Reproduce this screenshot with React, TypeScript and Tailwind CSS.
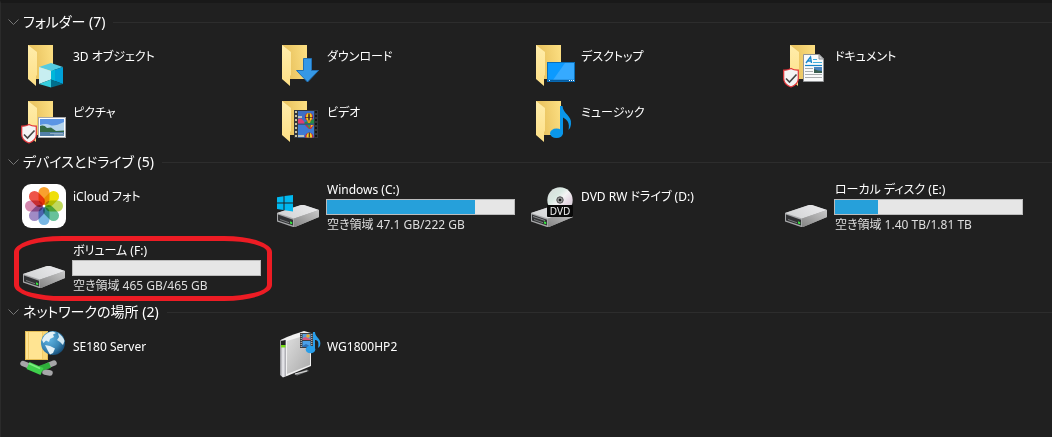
/**
 * "This PC" view: collapsible groups of folders, drives and network places shown as tiles.
 */

import { useState } from 'react';
import type { ReactNode } from 'react';

interface Item {
  name: string;
  icon: ReactNode;
  usage?: { percent: number; text: string };
  marked?: boolean;
}

interface GroupProps {
  title: string;
  items: Item[];
  tall?: boolean;
}

function Icon({ children }: { children: ReactNode }) {
  return (
    <svg viewBox="0 0 48 48" className="h-12 w-12 shrink-0" aria-hidden="true">
      {children}
    </svg>
  );
}

function Folder({ children, synced }: { children: ReactNode; synced?: boolean }) {
  return (
    <Icon>
      <defs>
        <linearGradient id="folderBack" x1="0" x2="1" y1="0.6" y2="0.4">
          <stop offset="0.3" stopColor="#ebc663" />
          <stop offset="1" stopColor="#fbdd80" />
        </linearGradient>
        <linearGradient id="folderFlap" x1="0" x2="0" y1="0" y2="1">
          <stop offset="0" stopColor="#ffedab" />
          <stop offset="1" stopColor="#fddf86" />
        </linearGradient>
      </defs>
      <path d="M8 4H33V38H8Z" fill="url(#folderBack)" />
      <path d="M8 4L17 11V34L16 35V45L8 38Z" fill="url(#folderFlap)" />
      {children}
      {synced && (
        <>
          <path d="M9 27.5C11.5 29 14 29.3 16.3 29.2V37.5C16.3 42 13 44.5 9 46C5 44.5 1.7 42 1.7 37.5V29.2C4 29.3 6.5 29 9 27.5Z" fill="#f4f4f4" stroke="#e23338" strokeWidth="1.2" />
          <path d="M4 37.5L7.5 41L14.5 33.5" fill="none" stroke="#444" strokeWidth="1.6" />
        </>
      )}
    </Icon>
  );
}

function Note() {
  return (
    <>
      <path d="M32 9H34.5C35 17 44 18.5 43 27C42.7 29.5 42 31.5 40.5 33C42 26 39.5 23 35 20.5V36H32Z" fill="#0a97ea" />
      <ellipse cx="28.5" cy="36.3" rx="6.5" ry="4.8" fill="#0a97ea" />
    </>
  );
}

function Balloon({ cx, cy, r }: { cx: number; cy: number; r: number }) {
  return (
    <>
      <circle cx={cx} cy={cy} r={r} fill="#bd2440" />
      <ellipse cx={cx} cy={cy} rx={r * 0.75} ry={r} fill="#f5cf1e" />
      <ellipse cx={cx} cy={cy} rx={r * 0.22} ry={r} fill="#4a3328" />
      <path d={`M${cx - r} ${cy + 0.5}H${cx + r}`} stroke="#3c2230" strokeWidth="0.7" />
      <path d={`M${cx - 2} ${cy + r - 0.5}H${cx + 2}L${cx + 1} ${cy + r + 2}H${cx - 1}Z`} fill="#d8991a" />
    </>
  );
}

function Film() {
  return (
    <>
      <rect x="20" y="13" width="24" height="28" fill="#34363a" />
      <rect x="24" y="14" width="16" height="12.5" fill="#3e6fc6" />
      <rect x="24" y="27.5" width="16" height="13" fill="#3f7bd3" />
      <path d="M24 22Q28 20 31 26.5H24Z" fill="#dc3f73" />
      <path d="M31 25L40 22V26.5H30Z" fill="#238b49" />
      <path d="M24 20H28M24 39H30" stroke="#e8dcb2" strokeWidth="1.5" />
      <Balloon cx={35} cy={20} r={4} />
      <path d="M31 28H40L37 32H35Z" fill="#ca2d38" />
      <path d="M33 28H36V32Z" fill="#3b9a42" />
      <path d="M37 28H39L36.5 31Z" fill="#f6d321" />
      <path d="M31 40.5C30.5 34 40 34 39.5 40.5Z" fill="#be2644" />
      <path d="M32.5 40.5C32 34 38.5 34 38 40.5Z" fill="#f4d021" />
      <path d="M35.3 35.5V40.5" stroke="#493225" strokeWidth="1.2" />
      <path d="M22 14V41" stroke="#c9c4a4" strokeWidth="2" strokeDasharray="2 2" />
      <path d="M42 14V41" stroke="#101214" strokeWidth="2" strokeDasharray="2 2" />
    </>
  );
}

function Disk({ children, slot }: { children?: ReactNode; slot?: boolean }) {
  return (
    <Icon>
      <defs>
        <linearGradient id="diskTop" x1="0" x2="1" y1="0.7" y2="0.3">
          <stop offset="0" stopColor="#d3d4d5" />
          <stop offset="1" stopColor="#e9e9eb" />
        </linearGradient>
        <linearGradient id="diskSide" x1="0" x2="1" y1="1" y2="0">
          <stop offset="0" stopColor="#858585" />
          <stop offset="1" stopColor="#c8c8c8" />
        </linearGradient>
      </defs>
      <path d="M3 32L27 24H30L45 29V36L21 46H19L3 40.5Z" fill="#a6a7a9" />
      <path d="M3 32L27 24H30L45 29L20 37.5Z" fill="url(#diskTop)" />
      <path d="M20 37.5L45 29V36L21 46H20Z" fill="url(#diskSide)" />
      <path d="M4 33.5L19 38.7V44.5L4 39.5Z" fill="#313234" />
      <path d="M6 38.5L15 41.7" stroke="#77797b" strokeWidth="1" />
      {slot && <path d="M5 35.5L17 39.5" stroke="#898b8d" strokeWidth="1" />}
      <path d="M16 40.3L18.2 41.2V43.2L16 42.5Z" fill="#36e43f" />
      {children}
    </Icon>
  );
}

const objects3d = (
  <Folder>
    <path d="M19 26L31 22L43 26L31 30Z" fill="#54cbe1" />
    <path d="M19 26L31 30V38.5L19 43Z" fill="#c7eef1" />
    <path d="M43 26L31 30V38.5L43 43Z" fill="#00a1d8" />
    <path d="M31 30L35 28.7V40L31 38.5Z" fill="#00b7da" />
    <path d="M19 43L31 38.5V46.5Z" fill="#35cddd" />
    <path d="M43 43L31 38.5V46.5Z" fill="#006f8d" />
  </Folder>
);

const downloads = (
  <Folder>
    <path d="M29.5 17.5H37.5V29.5H44.5L33.5 41L22.5 29.5H29.5Z" fill="#3598e6" stroke="#2170b4" strokeWidth="1" />
  </Folder>
);

const desktop = (
  <Folder>
    <rect x="19.5" y="21.5" width="27" height="19" fill="#0b9aff" stroke="#086eb8" />
    <path d="M37 22H46V39H25Z" fill="#36aaff" />
    <path d="M20 39.5H46" stroke="#075b9d" strokeWidth="1.5" />
    <path d="M21 39.5H22M41 39.5H42M43 39.5H44M45 39.5H46" stroke="#fff" strokeWidth="1" />
  </Folder>
);

const documents = (
  <Folder synced>
    <path d="M21.5 13.5H37L41.5 18V40.5H21.5Z" fill="#f9fafa" stroke="#929496" />
    <path d="M37 13.5V18H41.5Z" fill="#d7d8d9" stroke="#929496" />
    <path d="M24 22L28.5 16L29.5 22M25.5 20H29.5" fill="none" stroke="#1786cc" strokeWidth="1.4" />
    <path d="M31 18.5H35M31 21.5H40" stroke="#43aeda" strokeWidth="1.2" />
    <path d="M23 24.5H40" stroke="#1683c8" strokeWidth="1.2" />
    <path d="M23 27.5H31M23 30.5H31M23 33.5H40M23 36.5H40" stroke="#aaadaf" strokeWidth="1" />
    <rect x="32" y="26" width="8" height="6" fill="#4a83bd" />
    <path d="M32 28L36 29.5L40 30V32H32Z" fill="#395e50" />
  </Folder>
);

const pictures = (
  <Folder synced>
    <rect x="18.5" y="20.5" width="27" height="20" fill="#fff" stroke="#a7a9ac" />
    <rect x="20" y="22" width="24" height="17" fill="#5b95e4" />
    <path d="M20 28Q26 26 30 28T44 25V35H20Z" fill="#b4d4ec" />
    <path d="M20 29Q24 27.5 27 31L31 30.5L36 34L44 33.5V35H20Z" fill="#356a45" />
    <path d="M20 35H44V39H20Z" fill="#527fa8" />
    <path d="M30 36.5H43M34 38H44" stroke="#9fb9cb" strokeWidth="0.8" />
  </Folder>
);

const petals = [
  { angle: 0, color: '#f9a12e' },
  { angle: 45, color: '#efdf0a' },
  { angle: 90, color: '#bfd85d' },
  { angle: 135, color: '#68c19a' },
  { angle: 180, color: '#78b7e4' },
  { angle: 225, color: '#a08bc5' },
  { angle: 270, color: '#d487ae' },
  { angle: 315, color: '#ee5548' },
];

const icloudPhotos = (
  <Icon>
    <rect x="2" y="3" width="44" height="44" rx="9" fill="#fff" />
    {petals.map((p) => (
      <rect
        key={p.angle}
        x="18.5"
        y="6"
        width="11"
        height="18"
        rx="5.5"
        fill={p.color}
        className="mix-blend-multiply"
        transform={`rotate(${p.angle} 24 25)`}
      />
    ))}
    <circle cx="24" cy="25" r="1.2" fill="#fff" />
  </Icon>
);

const windowsDrive = (
  <Disk>
    <path d="M3 16.3L9.5 15.3V21.5H3ZM10.5 15.1L19 14V21.5H10.5ZM3 22.5H9.5V29L3 28ZM10.5 22.5H19V30.5L10.5 29.2Z" fill="#00b8ef" />
  </Disk>
);

const dvdDrive = (
  <Disk slot>
    <defs>
      <linearGradient id="disc" x1="0" x2="1" y1="0" y2="1">
        <stop offset="0" stopColor="#d8dad9" />
        <stop offset="0.35" stopColor="#d9e9e2" />
        <stop offset="0.5" stopColor="#f4f4f4" />
        <stop offset="0.7" stopColor="#e5d7e3" />
        <stop offset="1" stopColor="#c7cbcc" />
      </linearGradient>
    </defs>
    <circle cx="32" cy="19" r="12.7" fill="url(#disc)" />
    <circle cx="32" cy="19" r="3.2" fill="#9c9d9e" stroke="#4e4f50" />
    <circle cx="32" cy="19" r="1.3" fill="#1c1c1c" />
    <rect x="19" y="24" width="26" height="12" rx="1" fill="#090909" />
    <text x="32" y="34" textAnchor="middle" fontSize="10" fill="#f1f1f1" fontFamily="Noto Sans, sans-serif">DVD</text>
  </Disk>
);

const server = (
  <Icon>
    <defs>
      <radialGradient id="globe" cx="0.35" cy="0.35" r="0.7">
        <stop offset="0" stopColor="#5fb4e2" />
        <stop offset="0.6" stopColor="#3a88b8" />
        <stop offset="1" stopColor="#184f78" />
      </radialGradient>
    </defs>
    <rect x="5.5" y="0.5" width="22" height="28" fill="#ffe492" stroke="#e4bd55" />
    <path d="M8.5 1V28" stroke="#f2cb68" />
    <path d="M22.5 1V28" stroke="#f2cb68" />
    <path d="M23 1H27V28H23Z" fill="#f9d877" />
    <circle cx="33" cy="12" r="12" fill="url(#globe)" />
    <path d="M23 7Q26 1 33 0.5L36 2L33 3.5L34 6L30 8L29 11L26 9.5L23.5 12L22 9Z" fill="#e2f1f7" />
    <path d="M25 14L30 15L35 17.5L33 22L30 23.5L28 20Z" fill="#e2f1f7" />
    <path d="M38 2Q43 5 44.5 10L43 14L40 11L37 9L39 6Z" fill="#d2e8f2" />
    <g fill="none">
      <path d="M3 32.500L8 34.500" stroke="#a6a6a8" strokeWidth="5.500" strokeLinecap="round" />
      <path d="M28 34.500L34 32" stroke="#a6a6a8" strokeWidth="5.500" strokeLinecap="round" />
      <path d="M25 41L30 42" stroke="#a6a6a8" strokeWidth="5.500" strokeLinecap="round" />
      <path d="M16 39L30 34" stroke="#2fae3a" strokeWidth="6" />
      <path d="M8 34.500L22 40.500" stroke="#3fd04c" strokeWidth="7.500" strokeLinejoin="round" />
      <path d="M9 32.500L20 37.500" stroke="#80ec83" strokeWidth="1.500" />
    </g>
  </Icon>
);

const mediaServer = (
  <Icon>
    <defs>
      <linearGradient id="tower" x1="0" x2="1" y1="0" y2="1">
        <stop offset="0" stopColor="#dedede" />
        <stop offset="1" stopColor="#aaaaaa" />
      </linearGradient>
      <linearGradient id="towerFront" x1="0" x2="1" y1="0" y2="0">
        <stop offset="0" stopColor="#8b8b90" />
        <stop offset="0.5" stopColor="#f0f0f4" />
        <stop offset="1" stopColor="#a4a4aa" />
      </linearGradient>
    </defs>
    <path d="M20 43L33 38.5L35 40L23 44.5Z" fill="#77797a" />
    <path d="M21 43L33 40" stroke="#ddd" strokeWidth="1" />
    <path d="M6 10Q8 7 30 0L37 2V35L13 45L9 46Z" fill="#f1f1f1" />
    <path d="M13 10L36 3V34L13 43Z" fill="url(#tower)" />
    <path d="M6 10L8 8.5L12 9V45L9 46.5L6 44Z" fill="url(#towerFront)" />
    <path d="M7 10L11.5 9V14H7Z" fill="#202223" />
    <path d="M7 14H11.5V16.5H7Z" fill="#77dd16" />
    <rect x="26" y="2" width="13" height="15" fill="#3c3e42" />
    <rect x="28.5" y="3" width="8" height="6" fill="#5a9edb" />
    <rect x="28.5" y="10" width="8" height="6" fill="#4aa0e6" />
    <path d="M28.5 7.5L31 6L36.5 8V9H28.5Z" fill="#d9577e" />
    <circle cx="34" cy="5" r="1.8" fill="#f0a92c" />
    <path d="M28.5 15L32 13L36.5 15.5V16H28.5Z" fill="#2d6fb3" />
    <path d="M27.2 3V17M37.8 3V17" stroke="#d6d6d6" strokeWidth="1" strokeDasharray="1 1" />
    <path d="M39 1H41C41 7 48 7 46 15L44 17C45 11 44 9 41 9V19H39Z" fill="#299ee9" />
    <ellipse cx="36.5" cy="18.5" rx="4.8" ry="3.8" fill="#299ee9" />
  </Icon>
);

const folders: Item[] = [
  { name: '3D オブジェクト', icon: objects3d },
  { name: 'ダウンロード', icon: downloads },
  { name: 'デスクトップ', icon: desktop },
  { name: 'ドキュメント', icon: documents },
  { name: 'ピクチャ', icon: pictures },
  { name: 'ビデオ', icon: <Folder><Film /></Folder> },
  { name: 'ミュージック', icon: <Folder><Note /></Folder> },
];

const drives: Item[] = [
  { name: 'iCloud フォト', icon: icloudPhotos },
  { name: 'Windows (C:)', icon: windowsDrive, usage: { percent: 79, text: '空き領域 47.1 GB/222 GB' } },
  { name: 'DVD RW ドライブ (D:)', icon: dvdDrive },
  { name: 'ローカル ディスク (E:)', icon: <Disk />, usage: { percent: 23, text: '空き領域 1.40 TB/1.81 TB' } },
  { name: 'ボリューム (F:)', icon: <Disk />, usage: { percent: 0, text: '空き領域 465 GB/465 GB' }, marked: true },
];

const places: Item[] = [
  { name: 'SE180 Server', icon: server },
  { name: 'WG1800HP2', icon: mediaServer },
];

function Tile({ item }: { item: Item }) {
  const { usage } = item;
  return (
    <li className="relative flex items-start gap-1 pr-[13px]">
      <div className="pt-1">{item.icon}</div>
      {usage ? (
        <div className="min-w-0 flex-1 pt-[5px]">
          <div className="pl-px leading-4">{item.name}</div>
          <div className="mt-px mb-0.5 h-4 border border-[#bcbcbc] bg-[#e6e6e6]">
            <div className="h-full bg-[#26a0da]" style={{ width: `${usage.percent}%` }} />
          </div>
          <div className="pl-px leading-4 text-[#dedede]">{usage.text}</div>
        </div>
      ) : (
        <div className="pt-3 pl-px leading-4">{item.name}</div>
      )}
      {item.marked && (
        <div className="pointer-events-none absolute -top-0.5 right-0.5 -bottom-0.5 -left-1.5 rounded-[48px/16px] border-5 border-[#ed1c24]" />
      )}
    </li>
  );
}

function Group({ title, items, tall }: GroupProps) {
  const [open, setOpen] = useState(true);

  return (
    <section className="mb-[3px]">
      <div className="flex items-center gap-2">
        <button
          type="button"
          aria-expanded={open}
          onClick={() => setOpen(!open)}
          className="flex h-5 items-center gap-1 text-sm leading-5 whitespace-nowrap"
        >
          <svg viewBox="0 0 11 7" className={open ? 'h-[7px] w-[11px]' : 'h-[7px] w-[11px] -rotate-90'} aria-hidden="true">
            <path d="M0.5 0.5L5.5 5.5L10.5 0.5" fill="none" stroke="#777" />
          </svg>
          {title} ({items.length})
        </button>
        <div className="h-px flex-1 bg-[#2d2d2d]" />
      </div>
      {open && (
        <ul
          className={
            tall
              ? 'mt-[5px] ml-3 grid auto-rows-[minmax(61px,auto)] grid-cols-[repeat(auto-fill,254px)]'
              : 'mt-[5px] ml-3 grid auto-rows-[minmax(56px,auto)] grid-cols-[repeat(auto-fill,254px)]'
          }
        >
          {items.map((item) => (
            <Tile key={item.name} item={item} />
          ))}
        </ul>
      )}
    </section>
  );
}

export default function App() {
  return (
    <main className="min-h-screen border-t-3 border-l border-t-[#191919] border-l-[#2b2b2b] bg-[#202020] pt-[9px] pl-[7px] font-['Noto_Sans','Noto_Sans_CJK_JP',sans-serif] text-xs text-white [font-feature-settings:'palt']" lang="ja">
      <Group title="フォルダー" items={folders} />
      <Group title="デバイスとドライブ" items={drives} tall />
      <Group title="ネットワークの場所" items={places} />
    </main>
  );
}
